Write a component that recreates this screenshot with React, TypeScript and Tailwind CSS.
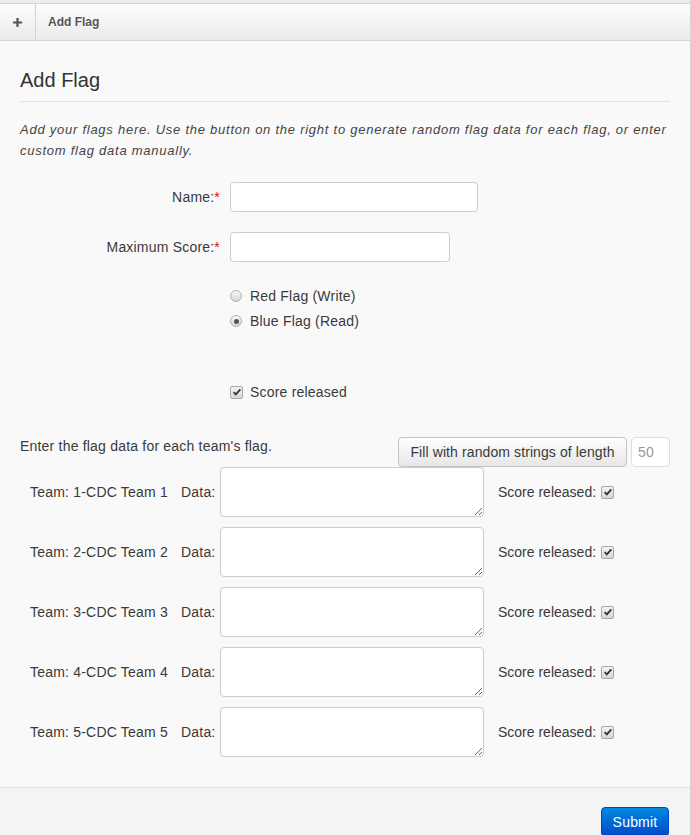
import React from 'react';

function Check() {
  return (
    <span className="inline-flex h-[13px] w-[13px] items-center justify-center rounded-[2px] border border-[#a8a8a8] bg-gradient-to-b from-[#f4f4f4] to-[#d6d6d6]">
      <svg viewBox="0 0 12 12" className="h-[10px] w-[10px]">
        <path d="M2 6.2 L4.6 8.8 L10 2.8" fill="none" stroke="#333" strokeWidth="2.2" />
      </svg>
    </span>
  );
}

function Radio({ on }: { on?: boolean }) {
  return (
    <span className="inline-flex h-[12px] w-[12px] items-center justify-center rounded-full border border-[#b0b0b0] bg-gradient-to-b from-[#f6f6f6] to-[#d8d8d8]">
      {on && <span className="h-[5px] w-[5px] rounded-full bg-[#555]" />}
    </span>
  );
}

const teams = [1, 2, 3, 4, 5];

export default function App() {
  return (
    <div className="w-[691px] min-h-[835px] border-r border-[#d6d6d6] bg-[#f9f9f9] text-[14px] tracking-[0.2px] text-[#3a3a3a] font-['Liberation_Sans',Arial,sans-serif]">
      <div className="h-[3px] bg-[#ececec]" />
      <div className="flex h-[38px] border-y border-[#d4d4d4] bg-gradient-to-b from-[#fcfcfc] to-[#ebebeb]">
        <div className="flex w-[36px] items-center justify-center border-r border-[#d4d4d4]">
          <svg viewBox="0 0 12 12" className="h-[11px] w-[11px]">
            <path d="M6 1 V11 M1 6 H11" stroke="#555" strokeWidth="2.4" />
          </svg>
        </div>
        <div className="flex items-center pl-[12px] text-[12px] tracking-normal font-bold text-[#555] [text-shadow:0_1px_0_#fff]">
          Add Flag
        </div>
      </div>

      <div className="px-[20px] pb-[30px] border-b border-[#e2e2e2]">
        <h3 className="pt-[25px] pb-[7px] text-[20px] leading-[28px] tracking-normal font-normal text-[#333] border-b border-[#e2e2e2]">
          Add Flag
        </h3>
        <p className="mt-[17px] text-[13px] leading-[21px] italic tracking-[0.75px] text-[#444]">
          Add your flags here. Use the button on the right to generate random flag data for each flag, or enter custom flag data manually.
        </p>

        <div className="mt-[21px] flex items-center">
          <label className="w-[200px] text-right">
            Name:<span className="text-[#e00]">*</span>
          </label>
          <input className="ml-[10px] h-[30px] w-[248px] rounded-[4px] border border-[#ccc] bg-white" />
        </div>
        <div className="mt-[20px] flex items-center">
          <label className="w-[200px] text-right">
            Maximum Score:<span className="text-[#e00]">*</span>
          </label>
          <input className="ml-[10px] h-[30px] w-[220px] rounded-[4px] border border-[#ccc] bg-white" />
        </div>

        <div className="ml-[210px] mt-[25px] flex flex-col gap-[7px]">
          <div className="flex items-center gap-[8px] leading-[18px]">
            <Radio />
            <span>Red Flag (Write)</span>
          </div>
          <div className="flex items-center gap-[8px] leading-[18px]">
            <Radio on />
            <span>Blue Flag (Read)</span>
          </div>
        </div>

        <div className="ml-[210px] mt-[53px] flex items-center gap-[7px] leading-[18px]">
          <Check />
          <span>Score released</span>
        </div>

        <div className="mt-[36px] flex items-start justify-between">
          <span className="leading-[18px]">Enter the flag data for each team's flag.</span>
          <div className="flex items-center gap-[4px]">
            <button className="h-[30px] w-[229px] rounded-[4px] border border-[#c4c4c4] bg-gradient-to-b from-white to-[#e6e6e6] text-[14px] tracking-[0.1px] text-[#3a3a3a]">
              Fill with random strings of length
            </button>
            <input
              defaultValue="50"
              className="h-[30px] w-[39px] rounded-[4px] border border-[#ddd] bg-white px-[6px] text-[14px] text-[#999]"
            />
          </div>
        </div>

        <div className="flex flex-col gap-[10px]">
          {teams.map((n) => (
            <div key={n} className="flex items-center">
              <span className="ml-[10px] w-[151px]">Team: {n}-CDC Team {n}</span>
              <span className="w-[39px]">Data:</span>
              <textarea className="h-[50px] w-[264px] rounded-[4px] border border-[#ccc] bg-white" />
              <span className="ml-[14px] tracking-[0px]">Score released:</span>
              <span className="ml-[5px] flex">
                <Check />
              </span>
            </div>
          ))}
        </div>
      </div>

      <div className="flex justify-end bg-[#f4f4f4] pt-[19px] pr-[21px] pb-[10px]">
        <button className="h-[30px] w-[68px] rounded-[4px] border border-[#0044cc] bg-gradient-to-b from-[#0088dd] to-[#0048cc] text-[14px] text-white">
          Submit
        </button>
      </div>
    </div>
  );
}
